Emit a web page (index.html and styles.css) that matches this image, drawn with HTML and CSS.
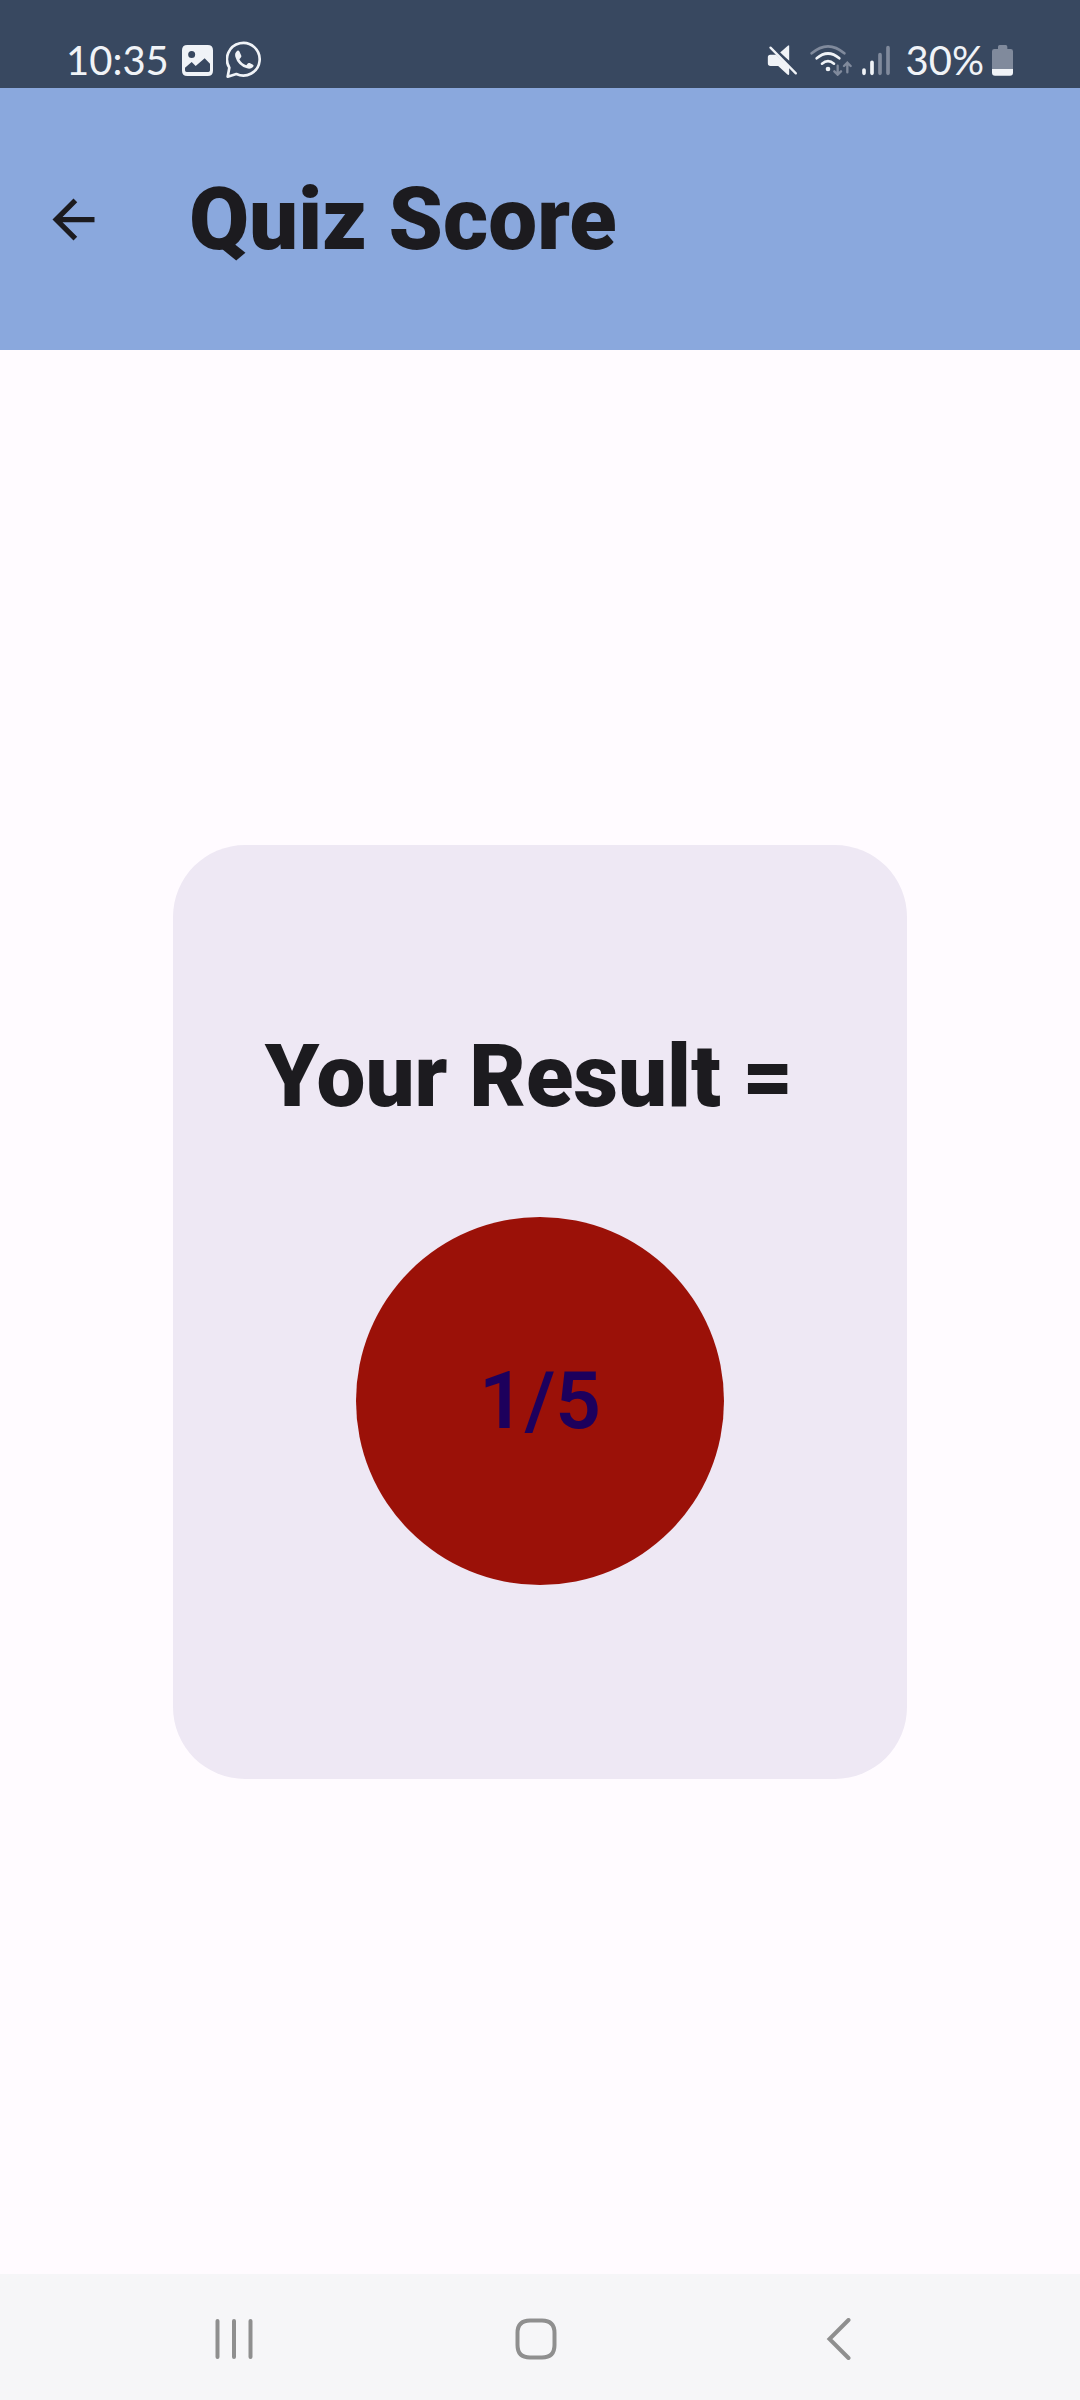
FILE: index.html
```
<!DOCTYPE html>
<html lang="en">
<head>
<meta charset="utf-8">
<meta name="viewport" content="width=device-width, initial-scale=1">
<title>Quiz Score</title>
<link rel="stylesheet" href="styles.css">
</head>
<body>
<div class="screen">
  <div class="status">
    <div class="status-left">
      <span class="clock">10:35</span>
      <svg class="icon-picture" viewBox="0 0 93 93" width="31" height="31" aria-hidden="true">
        <path fill="#f0f3f7" fill-rule="evenodd" d="M16 0H77Q93 0 93 16V77Q93 93 77 93H16Q0 93 0 77V16Q0 0 16 0ZM29 18a10.500 10.500 0 1 0 0 21a10.500 10.500 0 1 0 0-21ZM9 68V76Q9 81 14 81H79Q84 81 84 76V56L68 40L41 63L29 51Z"/>
      </svg>
      <svg class="icon-chat" viewBox="0 0 111 114" width="37" height="38" aria-hidden="true">
        <path fill="none" stroke="#f0f3f7" stroke-width="8" stroke-linejoin="round" d="M5 107L10 80A49 49 0 1 1 31 99Z"/>
        <path fill="#f0f3f7" d="M34 29Q39 28 41 33L46 44Q47 47 44 50L40 55Q47 68 61 73L66 67Q68 65 71 66L81 71Q85 73 81 78Q74 85 63 82Q35 73 28 47Q25 35 34 29Z"/>
      </svg>
    </div>
    <div class="status-right">
      <svg viewBox="76 72 92 96" width="31" height="32" aria-hidden="true">
        <g fill="#f0f3f7"><path d="M142 77V122L114 98L138 77Q142 74 142 77Z"/><path d="M85 104H103L142 142V162Q141 167 136 163L109 138H86Q78 138 78 130V112Q78 104 85 104Z"/></g>
        <path stroke="#384860" stroke-width="7" d="M92 79L168 155"/>
        <path stroke="#f0f3f7" stroke-width="7" stroke-linecap="round" d="M86 83L162 160"/>
      </svg>
      <svg class="icon-wifi" viewBox="206 72 126 96" width="42" height="32" aria-hidden="true">
        <g fill="none" stroke-width="8" stroke-linecap="round">
          <path stroke="#808a9c" d="M211 100Q260 58 309 100"/>
          <path stroke="#f0f3f7" d="M226 115Q260 86 294 115M242 131Q260 116 278 131"/>
          <path stroke="#808a9c" stroke-width="7" d="M289 137V163M279 154L289 164L299 154M318 157V130M308 138L318 128L328 138"/>
        </g>
        <circle cx="260" cy="147" r="7" fill="#f0f3f7"/>
      </svg>
      <svg class="icon-signal" viewBox="360 72 84 96" width="28" height="32" aria-hidden="true">
        <g stroke-width="11" stroke-linecap="round"><path stroke="#f0f3f7" d="M366 150V160M390 127V160"/><path stroke="#808a9c" d="M414 104V160M438 83V160"/></g>
      </svg>
      <span class="charge">30%</span>
      <svg viewBox="756 72 63 96" width="21" height="32" aria-hidden="true">
        <path fill="#808a9c" d="M774 80Q774 75 779 75H797Q802 75 802 80V87H812Q819 87 819 94V147H756V94Q756 87 763 87H774Z"/>
        <path fill="#f0f3f7" d="M756 147H819V158Q819 167 810 167H765Q756 167 756 158Z"/>
      </svg>
    </div>
  </div>

  <header class="app-bar">
    <button class="back" type="button" aria-label="Back">
      <svg viewBox="0 0 24 24" width="63" height="63" aria-hidden="true"><path fill="#1c1b1f" d="M20 11H7.830l5.590-5.590L12 4l-8 8 8 8 1.410-1.410L7.830 13H20z"/></svg>
    </button>
    <h1 class="title">Quiz Score</h1>
  </header>

  <main class="content">
    <section class="card">
      <h2 class="title">Your Result =&nbsp;</h2>
      <div class="score">1/5</div>
    </section>
  </main>

  <nav class="nav">
    <button type="button" aria-label="Recent apps">
      <svg viewBox="0 0 42 42" width="42" height="42" aria-hidden="true"><path stroke="#8f8f8f" stroke-width="4" stroke-linecap="round" d="M4.500 3V39M21 3V39M37.500 3V39"/></svg>
    </button>
    <button type="button" aria-label="Home">
      <svg viewBox="0 0 42 42" width="42" height="42" aria-hidden="true"><path fill="none" stroke="#8f8f8f" stroke-width="4" d="M15 2.500H27Q39.500 2.500 39.500 15V27Q39.500 39.500 27 39.500H15Q2.500 39.500 2.500 27V15Q2.500 2.500 15 2.500Z"/></svg>
    </button>
    <button type="button" aria-label="Back">
      <svg viewBox="0 0 42 42" width="42" height="42" aria-hidden="true"><path fill="none" stroke="#8f8f8f" stroke-width="4" stroke-linecap="round" d="M30.500 2L11.500 21L30.500 40"/></svg>
    </button>
  </nav>
</div>
</body>
</html>
```

FILE: styles.css
```
* {
  box-sizing: border-box;
}

body {
  margin: 0;
  background: #fffbff;
  color: #1c1b1f;
  font-family: Roboto, "Liberation Sans", sans-serif;
}

svg {
  display: block;
  flex: none;
}

button {
  display: flex;
  align-items: center;
  justify-content: center;
  padding: 0;
  border: 0;
  background: none;
}

.screen {
  display: flex;
  flex-direction: column;
  min-height: 100vh;
}

.status {
  display: flex;
  align-items: flex-end;
  justify-content: space-between;
  padding: 32px 67px 0 66px;
  height: 88px;
  background: #384860;
  color: #f0f3f7;
  font: 40px/56px Lato, sans-serif;
}

.status-left,
.status-right {
  display: flex;
  align-items: center;
}

.icon-picture {
  margin-left: 13px;
}

.icon-chat {
  margin-left: 13px;
}

.icon-wifi {
  margin-left: 12px;
}

.icon-signal {
  margin-left: 10px;
}

.charge {
  margin: 0 8px 0 16px;
}

.app-bar {
  display: flex;
  align-items: center;
  gap: 84px;
  height: 262px;
  padding: 0 42px;
  background: #8aa8dd;
}

.title {
  margin: 0;
  font-size: 87px;
  line-height: 126px;
  font-weight: 900;
  white-space: nowrap;
}

.content {
  flex: 1;
  display: flex;
  align-items: center;
  justify-content: center;
}

.card {
  display: flex;
  flex-direction: column;
  align-items: center;
  gap: 78px;
  width: 68%;
  min-width: 640px;
  padding: 168px 0 194px;
  border-radius: 72px;
  background: #eee8f4;
}

.score {
  display: flex;
  align-items: center;
  justify-content: center;
  width: 368px;
  aspect-ratio: 1;
  border-radius: 50%;
  background: #9b1108;
  color: #1d005c;
  font-size: 80px;
  font-weight: 600;
}

.nav {
  display: grid;
  grid-template-columns: repeat(3, 1fr);
  height: 126px;
  padding: 4px 90px 0 83px;
  background: #f6f6f8;
}
```
